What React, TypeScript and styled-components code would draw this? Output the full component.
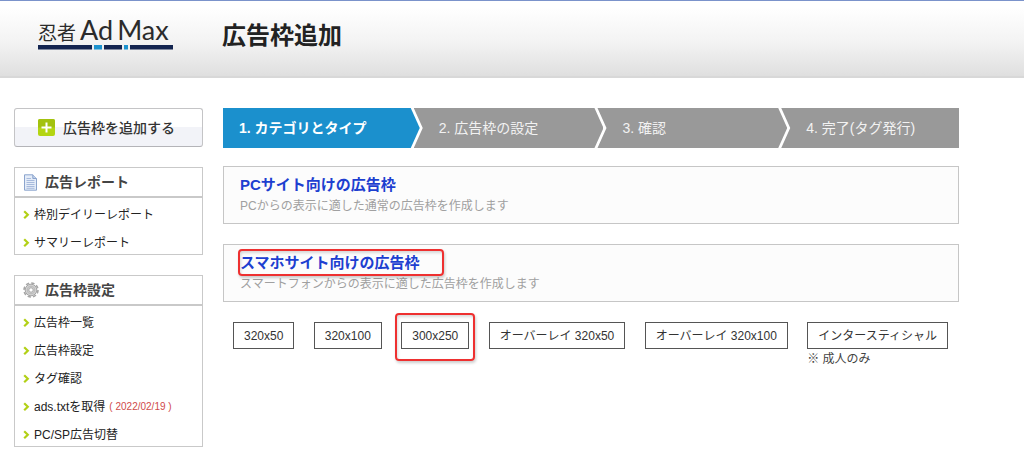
import React from 'react';
import styled, { createGlobalStyle } from 'styled-components';

const GlobalStyle = createGlobalStyle`
  *, *::before, *::after { box-sizing: border-box; }
  body {
    margin: 0;
    background: #fff;
    color: #333;
    font: 12px/20px "Liberation Sans", "Noto Sans CJK JP", sans-serif;
  }
  h1, h2, h3, p, ul, ol { margin: 0; padding: 0; }
  ul, ol { list-style: none; }
  a { color: inherit; text-decoration: none; }
  button { font: inherit; color: inherit; cursor: pointer; }
`;

const Header = styled.header`
  display: flex;
  align-items: flex-start;
  height: 78px;
  border-top: 1px solid #7b93cb;
  border-bottom: 2px solid #d8d8d8;
  background: linear-gradient(#fff 8%, #f3f3f3 55%, #dfdfdf);
`;

const Logo = styled.a`
  flex: none;
  display: flex;
  flex-direction: column;
  width: 222px;
  padding: 19px 0 0 38px;
`;

const LogoWords = styled.span`
  display: flex;
  align-items: baseline;
  gap: 4px;
  height: 25px;
  color: #2b2b2b;
  white-space: nowrap;
`;

const LogoKanji = styled.span`
  font-size: 19px;
`;

const LogoLatin = styled.span`
  font-family: Lato, sans-serif;
  font-size: 27px;
`;

const PageTitle = styled.h1`
  padding-top: 19px;
  font-size: 24px;
  line-height: 32px;
  color: #222;
`;

const Body = styled.div`
  display: flex;
  gap: 20px;
  padding: 30px 65px 8px 14px;
`;

const Sidebar = styled.aside`
  flex: none;
  display: flex;
  flex-direction: column;
  gap: 20px;
  width: 189px;
`;

const AddButton = styled.button`
  display: flex;
  align-items: center;
  gap: 8px;
  height: 39px;
  padding: 0 23px;
  border: 1px solid #c4c4c6;
  border-bottom-color: #b4b4b8;
  border-radius: 3px;
  background: linear-gradient(#fff 50%, #f2f3f8 50%);
  font-size: 14px;
  font-weight: 500;
`;

const Panel = styled.nav`
  border: 1px solid #c9c9c9;
`;

const PanelTitle = styled.h2`
  display: flex;
  align-items: center;
  gap: 6px;
  height: 30px;
  padding: 0 8px;
  border-bottom: 2px solid #c9c9c9;
  color: #444;
  font-size: 14px;
  font-weight: 700;
`;

const MenuList = styled.ul`
  display: flex;
  flex-direction: column;
  gap: 8px;
  padding: 7px 8px 1px;
`;

const MenuLink = styled.a`
  display: flex;
  align-items: center;
  gap: 4px;
  height: 20px;
  color: #222;
  white-space: nowrap;
`;

const MenuDate = styled.span`
  font-size: 10px;
  color: #cf4a4a;
`;

const Content = styled.main`
  flex: 1;
  min-width: 0;
`;

const Steps = styled.ol`
  display: grid;
  grid-template-columns: 191fr 184fr 184fr 178fr;
  margin-bottom: 18px;
`;

const Step = styled.li<{ $active?: boolean }>`
  height: 40px;
  margin-right: -6px;
  padding-left: 25px;
  background: ${(p) => (p.$active ? '#1b90cd' : '#999')};
  color: ${(p) => (p.$active ? '#fff' : '#f2f2f2')};
  font-size: 14px;
  font-weight: ${(p) => (p.$active ? 700 : 400)};
  line-height: 40px;
  white-space: nowrap;
  clip-path: polygon(0 0, calc(100% - 9px) 0, 100% 50%, calc(100% - 9px) 100%, 0 100%, 9px 50%);

  &:first-child {
    padding-left: 16px;
    clip-path: polygon(0 0, calc(100% - 9px) 0, 100% 50%, calc(100% - 9px) 100%, 0 100%);
  }
  &:last-child {
    margin-right: 0;
    clip-path: polygon(0 0, 100% 0, 100% 100%, 0 100%, 9px 50%);
  }
`;

const Category = styled.section`
  height: 58px;
  margin-bottom: 20px;
  padding: 8px 16px;
  border: 1px solid #c6c6c6;
  background: #fcfcfc;
`;

const CategoryTitle = styled.h3`
  position: relative;
  font-size: 15px;
  line-height: 20px;
  color: #1d3fd0;
`;

const CategoryNote = styled.p`
  line-height: 22px;
  color: #a0a0a0;
`;

const Sizes = styled.ul`
  display: flex;
  align-items: flex-start;
  justify-content: space-between;
  padding: 0 11px 0 10px;
`;

const SizeItem = styled.li`
  position: relative;
`;

const SizeButton = styled.button`
  display: block;
  height: 27px;
  padding: 0 10px;
  border: 1px solid #555;
  border-radius: 0;
  background: #fff;
  line-height: 27px;
  white-space: nowrap;
`;

const SizeNote = styled.p`
  color: #444;
`;

const Marker = styled.span`
  position: absolute;
  border: 2px solid #ee3030;
  border-radius: 4px;
  box-shadow: 1px 2px 3px rgba(0, 0, 0, 0.2), inset 1px 2px 3px rgba(0, 0, 0, 0.15);
  pointer-events: none;
`;

const TitleMarker = styled(Marker)`
  top: -4px;
  left: -2px;
  width: 206px;
  height: 27px;
`;

const SizeMarker = styled(Marker)`
  inset: -9px -6px -12px;
`;

const LogoBar = () => (
  <svg width="135" height="5" viewBox="0 0 135 5" aria-hidden="true">
    <path fill="#132450" d="M0 0h54v4.500H0zM66 0h18v4.500H66zM92 0h43v4.500H92z" />
    <path fill="#1d93cf" d="M56 0h8v4.500h-8zM86 0h4v4.500h-4z" />
  </svg>
);

const PlusIcon = () => (
  <svg width="17" height="17" viewBox="0 0 17 17" aria-hidden="true">
    <rect width="17" height="17" rx="2" fill="#b4d512" />
    <path d="M2 0h13a2 2 0 0 1 2 2v6.500H0V2a2 2 0 0 1 2-2z" fill="#a3c20f" />
    <path d="M8.500 3.500v10M3.500 8.500h10" stroke="#fff" strokeWidth="2" />
  </svg>
);

const DocumentIcon = () => (
  <svg width="16" height="17" viewBox="0 0 16 17" aria-hidden="true">
    <path d="M1.500 0.800h8.300l3.700 3.700v11.700h-12z" fill="#e4ecf8" stroke="#8ba4cd" />
    <path d="M9.800 0.800v3.700h3.700" fill="#c4d2ea" stroke="#8ba4cd" />
    <path d="M3.500 4.500h4.500M3.500 6.500h8M3.500 8.500h8M3.500 10.500h8M3.500 12.500h8M3.500 14.300h8" stroke="#9fb4d8" strokeWidth="0.900" />
  </svg>
);

const GearIcon = () => (
  <svg width="16" height="16" viewBox="0 0 16 16" fill="none" aria-hidden="true">
    <circle cx="8" cy="8" r="7" stroke="#a6a6a6" strokeWidth="1.600" strokeDasharray="3.400 2.098" />
    <circle cx="8" cy="8" r="5.800" fill="#d2d2d2" stroke="#a6a6a6" strokeWidth="1" />
    <circle cx="8" cy="8" r="3.800" stroke="#b4b4b4" strokeWidth="0.800" />
    <circle cx="8" cy="8" r="2.200" fill="#fff" stroke="#a0a0a0" strokeWidth="0.900" />
  </svg>
);

const ChevronIcon = () => (
  <svg width="7" height="10" viewBox="0 0 7 10" fill="none" aria-hidden="true">
    <path d="M1.200 1.200L4.800 4.700L1.200 8.200" stroke="#b2d016" strokeWidth="2.200" />
  </svg>
);

type MenuEntry = { label: string; date?: string };

const reportMenu: MenuEntry[] = [{ label: '枠別デイリーレポート' }, { label: 'サマリーレポート' }];

const settingsMenu: MenuEntry[] = [
  { label: '広告枠一覧' },
  { label: '広告枠設定' },
  { label: 'タグ確認' },
  { label: 'ads.txtを取得', date: '( 2022/02/19 )' },
  { label: 'PC/SP広告切替' },
];

const sizes: { label: string; marked?: boolean; note?: string }[] = [
  { label: '320x50' },
  { label: '320x100' },
  { label: '300x250', marked: true },
  { label: 'オーバーレイ 320x50' },
  { label: 'オーバーレイ 320x100' },
  { label: 'インタースティシャル', note: '※ 成人のみ' },
];

const MenuPanel = ({ title, icon, items }: { title: string; icon: React.ReactNode; items: MenuEntry[] }) => (
  <Panel aria-label={title}>
    <PanelTitle>
      {icon}
      {title}
    </PanelTitle>
    <MenuList>
      {items.map((item) => (
        <li key={item.label}>
          <MenuLink href="#">
            <ChevronIcon />
            {item.label}
            {item.date && <MenuDate>{item.date}</MenuDate>}
          </MenuLink>
        </li>
      ))}
    </MenuList>
  </Panel>
);

export default function App() {
  return (
    <>
      <GlobalStyle />
      <Header>
        <Logo href="#">
          <LogoWords>
            <LogoKanji>忍者</LogoKanji>
            <LogoLatin>Ad</LogoLatin>
            <LogoLatin>Max</LogoLatin>
          </LogoWords>
          <LogoBar />
        </Logo>
        <PageTitle>広告枠追加</PageTitle>
      </Header>
      <Body>
        <Sidebar>
          <AddButton type="button">
            <PlusIcon />
            広告枠を追加する
          </AddButton>
          <MenuPanel title="広告レポート" icon={<DocumentIcon />} items={reportMenu} />
          <MenuPanel title="広告枠設定" icon={<GearIcon />} items={settingsMenu} />
        </Sidebar>
        <Content>
          <Steps>
            <Step $active aria-current="step">1. カテゴリとタイプ</Step>
            <Step>2. 広告枠の設定</Step>
            <Step>3. 確認</Step>
            <Step>4. 完了(タグ発行)</Step>
          </Steps>
          <Category>
            <CategoryTitle>
              <a href="#">PCサイト向けの広告枠</a>
            </CategoryTitle>
            <CategoryNote>PCからの表示に適した通常の広告枠を作成します</CategoryNote>
          </Category>
          <Category>
            <CategoryTitle>
              <a href="#">スマホサイト向けの広告枠</a>
              <TitleMarker />
            </CategoryTitle>
            <CategoryNote>スマートフォンからの表示に適した広告枠を作成します</CategoryNote>
          </Category>
          <Sizes>
            {sizes.map((size) => (
              <SizeItem key={size.label}>
                <SizeButton type="button">{size.label}</SizeButton>
                {size.note && <SizeNote>{size.note}</SizeNote>}
                {size.marked && <SizeMarker />}
              </SizeItem>
            ))}
          </Sizes>
        </Content>
      </Body>
    </>
  );
}
